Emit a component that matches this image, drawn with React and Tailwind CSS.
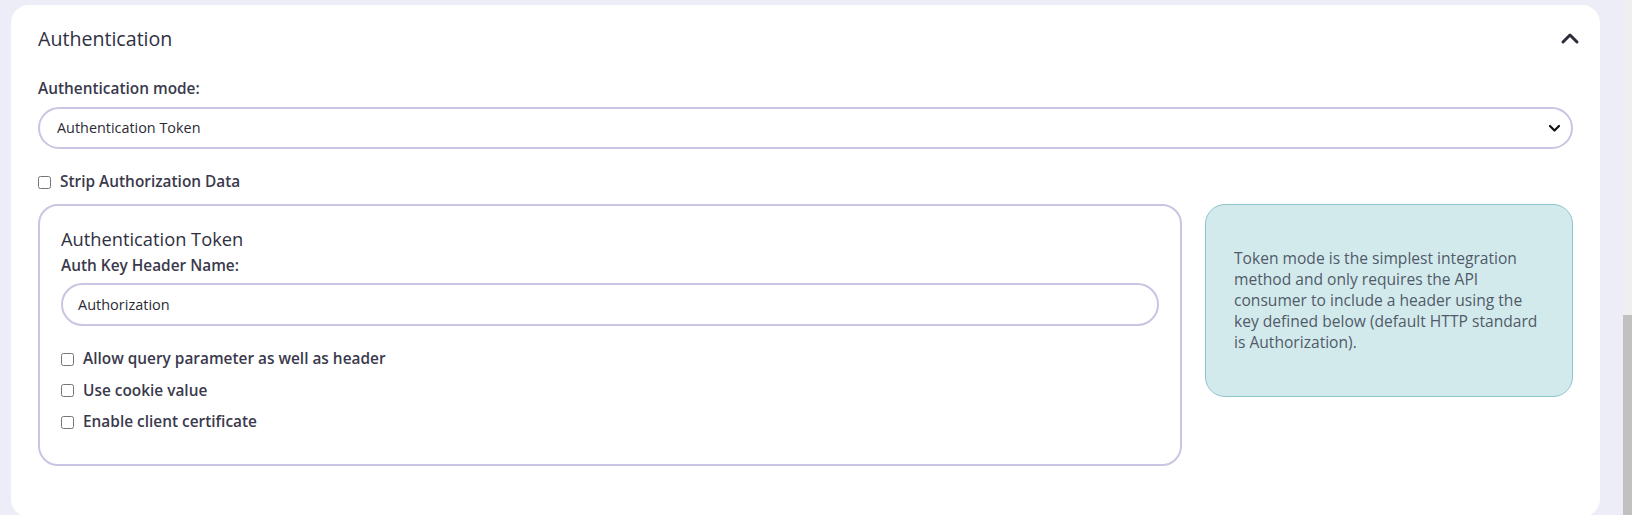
import React from "react";

function Box() {
  return (
    <span className="inline-block w-[13px] h-[13px] shrink-0 rounded-[2.5px] border border-[#767676] bg-white" />
  );
}

function CheckRow({ label }) {
  return (
    <div className="flex items-center gap-[9px] h-[20px]">
      <Box />
      <span className="text-[15.4px] leading-[20px] font-semibold text-[#3a3a4c]">{label}</span>
    </div>
  );
}

export default function App() {
  return (
    <div className="flex w-[1632px] h-[515px] overflow-hidden bg-[#ededf7] font-['Open_Sans','Noto_Sans',sans-serif]">
      <div className="ml-[11px] mt-[5px] w-[1589px] h-[512px] shrink-0 rounded-[18px] bg-white px-[27px] pt-[20px]">
        <div className="flex items-center justify-between h-[28px]">
          <h2 className="text-[19.6px] leading-[28px] font-medium [font-weight:520] text-[#2f3042]">Authentication</h2>
          <svg width="20" height="14" viewBox="0 0 20 14" className="mr-[-7px] mt-[-2px]" fill="none">
            <path d="M3 11 L10 4 L17 11" stroke="#2d2d3a" strokeWidth="3" strokeLinecap="round" strokeLinejoin="round" />
          </svg>
        </div>

        <div className="mt-[26px] text-[15.4px] leading-[20px] font-semibold text-[#3a3a4c]">Authentication mode:</div>

        <div className="mt-[8px] h-[42px] rounded-full border-2 border-[#c9c5e2] flex items-center justify-between pl-[17px] pr-[10px]">
          <span className="text-[14.4px] text-[#2b2b36]">Authentication Token</span>
          <svg width="13" height="9" viewBox="0 0 13 9" fill="none">
            <path d="M2 2 L6.5 6.5 L11 2" stroke="#111" strokeWidth="2.2" strokeLinecap="round" strokeLinejoin="round" />
          </svg>
        </div>

        <div className="mt-[23px]">
          <CheckRow label="Strip Authorization Data" />
        </div>

        <div className="mt-[12px] flex items-start gap-[23px]">
          <div className="flex-1 rounded-[20px] border-2 border-[#c9c5e2] pt-[21px] px-[21px] pb-[32px]">
            <div className="text-[18.3px] leading-[24px] font-medium [font-weight:520] text-[#2f3042]">Authentication Token</div>
            <div className="mt-[5px] text-[15.4px] leading-[20px] font-semibold text-[#3a3a4c]">Auth Key Header Name:</div>
            <div className="mt-[7px] h-[43px] rounded-full border-2 border-[#c9c5e2] flex items-center px-[15px]">
              <span className="text-[14.5px] text-[#2b2b36]">Authorization</span>
            </div>
            <div className="mt-[23px] flex flex-col gap-[11.5px]">
              <CheckRow label="Allow query parameter as well as header" />
              <CheckRow label="Use cookie value" />
              <CheckRow label="Enable client certificate" />
            </div>
          </div>

          <div className="w-[368px] shrink-0 rounded-[20px] border border-[#8cc5ca] bg-[#d3eaed] pl-[28px] pr-[10px] py-[43px]">
            <p className="text-[15.6px] leading-[21px] text-[#505a68] whitespace-nowrap">
              Token mode is the simplest integration<br />
              method and only requires the API<br />
              consumer to include a header using the<br />
              key defined below (default HTTP standard<br />
              is Authorization).
            </p>
          </div>
        </div>
      </div>

      <div className="flex-1 flex justify-end">
        <div className="w-[9px] h-full bg-[#efeff2] flex flex-col">
          <div className="mt-[315px] flex-1 bg-[#c1c1c1]" />
        </div>
      </div>
    </div>
  );
}
